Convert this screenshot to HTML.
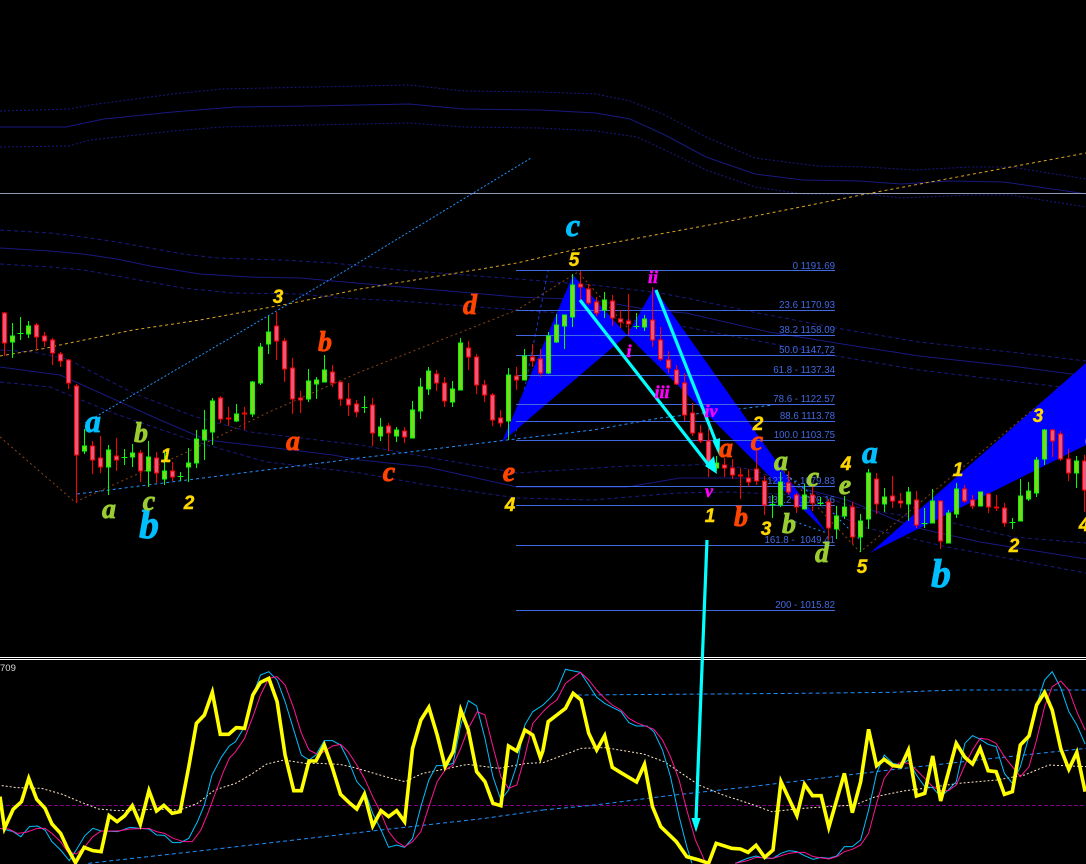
<!DOCTYPE html>
<html>
<head>
<meta charset="utf-8">
<style>
html,body{margin:0;padding:0;background:#000;width:1086px;height:864px;overflow:hidden}
svg{display:block;position:absolute;left:0;top:0}
.l{font-family:"Liberation Serif",serif;font-weight:bold;font-style:italic;text-anchor:middle;stroke-width:.8}
.d{font-family:"Liberation Sans",sans-serif;font-weight:bold;font-style:italic;text-anchor:middle;stroke-width:.4}
.f{font-family:"Liberation Sans",sans-serif;font-size:9.7px;fill:#4169e1;text-anchor:end}
.ns{vector-effect:non-scaling-stroke;fill:none}
</style>
</head>
<body>
<svg width="1086" height="864" viewBox="0 0 1086 864" xmlns="http://www.w3.org/2000/svg">
<rect width="1086" height="864" fill="#000"/>

<!-- upper bands -->
<g fill="none" stroke="#191980" stroke-width="1">
<polyline points="0,127 66,127 104,119 173,112 235,107 312,106 409,104 464,109 540,110 596,113 630,119 665,135 706,157 755,174 803,180 859,181 901,184 949,181 1004,182 1080,193 1086,194"/>
<polyline stroke-dasharray="2 2" points="0,111 69,109 90,105 173,94 222,89 312,87 409,85 464,91 540,92 596,94 630,101 665,115 706,137 755,158 817,166 866,167 914,170 970,167 1011,167 1086,179"/>
<polyline stroke-dasharray="2 2" points="0,147 69,146 90,140 173,131 222,127 312,125 409,123 464,127 540,128 596,131 637,137 665,150 706,170 755,187 803,194 866,194 901,198 970,195 1011,195 1086,207"/>
<!-- mid bands -->
<polyline stroke-dasharray="4 3" points="0,230 50,233 83,237 117,242 150,248 183,254 217,258 283,260 333,263 400,270 517,279 593,285 660,293 686,298 753,312 836,328 919,342 1019,353 1086,361"/>
<polyline points="0,248 50,251 83,254 117,259 150,266 200,274 250,277 300,278 333,281 367,284 460,292 517,297 593,300 650,310 686,313 769,332 836,343 919,356 1019,367 1086,376"/>
<polyline stroke-dasharray="4 3" points="0,264 50,267 83,270 117,276 150,282 183,288 233,293 300,294 343,298 400,301 517,310 593,315 647,322 686,327 753,340 836,356 919,370 1019,382 1086,390"/>
<!-- lower bands -->
<polyline stroke-dasharray="4 3" points="0,350 33,352 67,359 133,393 193,416 250,432 360,445 517,473 627,466 693,465 713,463 753,470 847,505 880,512 953,523 1013,537 1086,543"/>
<polyline points="0,367 60,375 87,387 160,420 207,440 267,447 333,455 360,460 427,467 517,487 627,487 680,478 763,478 847,500 913,527 980,542 1086,559"/>
<polyline stroke-dasharray="4 3" points="0,382 50,387 113,413 200,443 267,462 360,473 427,485 517,498 593,500 677,493 730,492 797,495 863,527 947,547 1086,573"/>
</g>

<!-- horizontal line -->
<path d="M0 193.5H1086" stroke="#8e9bb5" stroke-width="1" shape-rendering="crispEdges"/>

<!-- trendlines -->
<g fill="none" stroke-width="1">
<polyline stroke="#daa520" stroke-dasharray="3 3" points="0,356 47,348 55,346 133,330 200,320 293,303 360,289 517,263 573,250 720,223 866,194 1086,153"/>
<polyline stroke="#1e90ff" stroke-dasharray="2 2" points="85,423 343,272 531,158"/>
<polyline stroke="#1e90ff" stroke-dasharray="3 3" points="77,494 360,458 507,440 593,430 660,418 730,410 773,405"/>
<polyline stroke="#8b4513" stroke-dasharray="2 3" points="0,437 75,502 187,452 267,413 360,372 517,310 578,272 627,327 700,390 757,443 860,552 1086,366"/>
<polyline stroke="#1b3ad8" stroke-dasharray="3 3" points="515,437 548,271"/>
<polyline stroke="#1e90ff" stroke-dasharray="2 3" points="755,450 825,505 860,540"/>
<polyline stroke="#1e90ff" stroke-dasharray="2 3" points="790,520 827,533"/>
</g>

<!-- blue pattern -->
<g fill="#0000ff">
<polygon points="502,442 573,275 627,335"/>
<polygon points="627,335 654,288 827,533"/>
<polygon points="870,553 1086,363 1086,445"/>
</g>

<!-- fibonacci -->
<path d="M516 270.5H835M516 310.5H835M516 335.5H835M516 355.5H835M516 375.5H835M516 404.5H835M516 421.5H835M516 440.5H835M516 486.5H835M516 505.5H835M516 545.5H835M516 610.5H835" stroke="#4169e1" stroke-width="1" fill="none" shape-rendering="crispEdges"/>
<text class="f" x="835" y="269">0 1191.69</text>
<text class="f" x="835" y="308">23.6 1170.93</text>
<text class="f" x="835" y="333">38.2 1158.09</text>
<text class="f" x="835" y="353">50.0 1147.72</text>
<text class="f" x="835" y="373">61.8 - 1137.34</text>
<text class="f" x="835" y="402">78.6 - 1122.57</text>
<text class="f" x="835" y="419">88.6 1113.78</text>
<text class="f" x="835" y="438">100.0 1103.75</text>
<text class="f" x="835" y="484">127.2 - 1079.83</text>
<text class="f" x="835" y="503">138.2 - 1070.16</text>
<text class="f" x="835" y="543">161.8 -&#160; 1049.41</text>
<text class="f" x="835" y="608">200 - 1015.82</text>

<!-- green candles -->
<g shape-rendering="crispEdges">
<path stroke="#00ff00" stroke-width="1" fill="none" d="M12.5 323V358M20.5 317V340M17.5 333.5h6M28.5 321V338M84.5 429V454M108.5 445V495M124.5 449V465M121.5 457.5h6M132.5 444V467M148.5 441V487M164.5 450V485M180.5 472V481M177.5 476.5h6M188.5 448V482M196.5 430V468M204.5 410V460M212.5 398V445M236.5 404V422M252.5 381V417M260.5 343V385M268.5 316V354M308.5 369V402M316.5 377V399M324.5 355V382M364.5 396V413M361.5 407.5h6M380.5 418V441M396.5 427V442M412.5 401V438M420.5 378V419M428.5 367V395M452.5 381V407M460.5 338V390M508.5 368V440M524.5 349V380M548.5 332V374M556.5 314V343M564.5 315V349M572.5 274V327M604.5 292V318M636.5 313V329M633.5 326.5h6M644.5 315V331M716.5 456V471M772.5 495V518M769.5 504.5h6M780.5 472V507M804.5 484V509M820.5 497V506M817.5 503.5h6M836.5 506V539M844.5 496V519M860.5 514V552M868.5 469V529M884.5 488V512M908.5 487V521M924.5 508V528M921.5 523.5h6M932.5 489V523M948.5 510V543M956.5 483V518M980.5 492V506M1012.5 518V529M1009.5 522.5h6M1020.5 479V521M1028.5 482V501M1036.5 457V497M1044.5 429V465M1076.5 456V488"/>
<path stroke="#00ff00" stroke-width="1" fill="#7fd81e" d="M10.5 336h4v6h-4zM26.5 326h4v8h-4zM82.5 446h4v5h-4zM106.5 450h4v17h-4zM130.5 453h4v4h-4zM146.5 457h4v14h-4zM162.5 471h4v8h-4zM186.5 463h4v4h-4zM194.5 439h4v24h-4zM202.5 430h4v10h-4zM210.5 401h4v31h-4zM234.5 414h4v7h-4zM250.5 382h4v32h-4zM258.5 347h4v36h-4zM266.5 332h4v12h-4zM306.5 381h4v18h-4zM314.5 380h4v4h-4zM322.5 370h4v12h-4zM378.5 427h4v9h-4zM394.5 430h4v6h-4zM410.5 410h4v28h-4zM418.5 387h4v24h-4zM426.5 371h4v18h-4zM450.5 389h4v13h-4zM458.5 343h4v47h-4zM506.5 375h4v46h-4zM522.5 356h4v24h-4zM546.5 336h4v37h-4zM554.5 325h4v17h-4zM562.5 315h4v11h-4zM570.5 285h4v32h-4zM602.5 300h4v10h-4zM642.5 319h4v8h-4zM714.5 463h4v5h-4zM778.5 482h4v23h-4zM802.5 495h4v14h-4zM834.5 516h4v13h-4zM842.5 507h4v9h-4zM858.5 521h4v16h-4zM866.5 473h4v46h-4zM882.5 497h4v7h-4zM906.5 492h4v12h-4zM930.5 501h4v22h-4zM946.5 513h4v30h-4zM954.5 489h4v25h-4zM978.5 492h4v14h-4zM1018.5 496h4v25h-4zM1026.5 491h4v8h-4zM1034.5 460h4v33h-4zM1042.5 430h4v29h-4zM1074.5 461h4v12h-4z"/>

<!-- red candles -->
<path stroke="#ff0000" stroke-width="1" fill="none" d="M4.5 312V356M36.5 323V350M44.5 332V347M52.5 338V365M60.5 352V367M68.5 359V389M76.5 384V503M92.5 441V474M100.5 436V473M116.5 438V471M140.5 450V482M156.5 452V483M172.5 462V481M220.5 396V423M228.5 407V426M244.5 407V430M276.5 312V360M284.5 338V382M292.5 358V414M300.5 391V413M332.5 365V387M340.5 382V406M348.5 383V416M356.5 400V417M372.5 398V446M388.5 423V451M404.5 427V443M436.5 370V391M444.5 377V407M468.5 341V370M476.5 354V394M484.5 380V402M492.5 393V426M500.5 410V427M516.5 367V390M532.5 344V367M540.5 349V377M580.5 271V301M588.5 284V305M596.5 297V316M612.5 295V326M620.5 310V328M628.5 294V335M652.5 287V347M660.5 327V361M668.5 351V373M676.5 365V385M684.5 373V421M692.5 403V436M700.5 425V443M708.5 428V477M724.5 458V477M732.5 459V479M740.5 468V499M748.5 469V487M756.5 451V485M764.5 476V515M788.5 471V495M796.5 493V513M812.5 486V511M828.5 499V540M852.5 502V544M876.5 473V514M892.5 476V508M900.5 493V508M916.5 491V528M940.5 501V549M964.5 485V503M972.5 495V509M988.5 493V513M996.5 495V511M1004.5 503V527M1052.5 429V457M1060.5 431V461M1068.5 449V481M1084.5 455V512"/>
<path stroke="#ff0000" stroke-width="1" fill="#e8587f" d="M2.5 313h4v30h-4zM34.5 325h4v12h-4zM42.5 336h4v5h-4zM50.5 340h4v13h-4zM58.5 354h4v7h-4zM66.5 360h4v23h-4zM74.5 386h4v69h-4zM90.5 446h4v14h-4zM98.5 458h4v9h-4zM114.5 456h4v4h-4zM138.5 453h4v18h-4zM154.5 458h4v15h-4zM170.5 471h4v6h-4zM218.5 398h4v21h-4zM226.5 418h4v1h-4zM242.5 413h4v1h-4zM274.5 326h4v15h-4zM282.5 341h4v28h-4zM290.5 368h4v31h-4zM298.5 398h4v2h-4zM330.5 372h4v11h-4zM338.5 382h4v17h-4zM346.5 399h4v6h-4zM354.5 404h4v8h-4zM370.5 405h4v28h-4zM386.5 426h4v7h-4zM402.5 431h4v6h-4zM434.5 374h4v9h-4zM442.5 383h4v18h-4zM466.5 348h4v9h-4zM474.5 357h4v28h-4zM482.5 385h4v10h-4zM490.5 395h4v25h-4zM498.5 418h4v5h-4zM514.5 376h4v4h-4zM530.5 357h4v4h-4zM538.5 359h4v14h-4zM578.5 284h4v3h-4zM586.5 289h4v14h-4zM594.5 302h4v11h-4zM610.5 301h4v17h-4zM618.5 319h4v3h-4zM626.5 321h4v3h-4zM650.5 320h4v20h-4zM658.5 340h4v19h-4zM666.5 360h4v8h-4zM674.5 370h4v14h-4zM682.5 383h4v32h-4zM690.5 413h4v20h-4zM698.5 433h4v8h-4zM706.5 441h4v21h-4zM722.5 465h4v3h-4zM730.5 468h4v7h-4zM738.5 475h4v1h-4zM746.5 478h4v4h-4zM754.5 469h4v12h-4zM762.5 481h4v24h-4zM786.5 483h4v9h-4zM794.5 495h4v12h-4zM810.5 495h4v8h-4zM826.5 502h4v26h-4zM850.5 507h4v30h-4zM874.5 479h4v25h-4zM890.5 496h4v5h-4zM898.5 501h4v2h-4zM914.5 500h4v25h-4zM938.5 501h4v40h-4zM962.5 489h4v12h-4zM970.5 500h4v6h-4zM986.5 494h4v13h-4zM994.5 507h4v1h-4zM1002.5 508h4v15h-4zM1050.5 430h4v11h-4zM1058.5 434h4v25h-4zM1066.5 459h4v14h-4zM1082.5 461h4v29h-4z"/>
</g>

<!-- arrows -->
<g stroke="#00ffff" fill="none" stroke-width="3.2">
<path d="M580 300L711 468"/>
<path d="M656 290L716 442"/>
<path d="M707 540L696 820"/>
</g>
<g fill="#00ffff">
<polygon points="717,474 705,466 714,456"/>
<polygon points="712.5,441 720,438 719.5,456"/>
<polygon points="691.5,818 700.5,818 696,832"/>
</g>

<!-- wave labels -->
<g class="l" fill="#00bfff" stroke="#00bfff" font-size="32">
<text x="93" y="432">a</text><text x="573" y="236">c</text><text x="870" y="463">a</text>
<text x="149" y="538" font-size="40">b</text><text x="941" y="587" font-size="40">b</text>
</g>
<g class="l" fill="#ff4500" stroke="#ff4500" font-size="28">
<text x="325" y="351">b</text><text x="293" y="450">a</text><text x="389" y="481">c</text><text x="470" y="314">d</text><text x="509" y="481">e</text><text x="726" y="457">a</text><text x="757" y="450">c</text><text x="741" y="526">b</text>
</g>
<g class="l" fill="#9acd32" stroke="#9acd32" font-size="28">
<text x="109" y="518">a</text><text x="141" y="442">b</text><text x="149" y="510">c</text><text x="781" y="470">a</text><text x="813" y="486">c</text><text x="845" y="494">e</text><text x="789" y="533">b</text><text x="822" y="562">d</text>
</g>
<g class="d" fill="#ffd700" stroke="#ffd700" font-size="19">
<text x="278" y="303">3</text><text x="166" y="462">1</text><text x="189" y="509">2</text><text x="574" y="266">5</text><text x="510" y="511">4</text><text x="758" y="430">2</text><text x="710" y="522">1</text><text x="766" y="535">3</text><text x="846" y="470">4</text><text x="862" y="573">5</text><text x="958" y="476">1</text><text x="1014" y="552">2</text><text x="1038" y="422">3</text><text x="1084" y="531">4</text>
</g>
<g class="l" fill="#ff00ff" stroke="#ff00ff" font-size="18" style="stroke-width:.5">
<text x="629" y="357">i</text><text x="653" y="283">ii</text><text x="662" y="398">iii</text><text x="711" y="417">iv</text><text x="709" y="497">v</text>
</g>
<text class="l" x="1093" y="447" font-size="34" fill="#ffc0cb" stroke="#ffc0cb">c</text>

<!-- separators -->
<path d="M0 657.5H1086M0 659.5H1086" stroke="#fff" stroke-width="1" shape-rendering="crispEdges"/>
<text x="0" y="671" font-family="'Liberation Sans',sans-serif" font-size="9.5" fill="#ddd">709</text>

<!-- indicator -->
<path d="M0 805.5H1086" stroke="#800080" stroke-dasharray="4 2" stroke-width="1" shape-rendering="crispEdges"/>
<g transform="translate(0,650) scale(0.3464,0.33333)">
<polyline class="ns" stroke="#ffe4c4" stroke-width="1" stroke-dasharray="2 2" points="5,407 50,413 120,415 180,433 230,455 285,477 340,482 400,480 450,477 520,480 570,460 620,420 680,400 730,370 770,342 820,330 880,340 920,340 980,343 1020,352 1080,370 1130,385 1170,395 1220,370 1270,360 1350,343 1440,355 1520,340 1568,338"/>
<polyline class="ns" stroke="#1e90ff" stroke-width="1" stroke-dasharray="4 3" points="255,640 600,600 1100,540 1400,505 1568,480"/>
<polyline class="ns" stroke="#00bfff" stroke-width="1" points="0,535 38,545 60,560 85,530 108,528 130,540 150,575 175,600 200,632 220,600 245,557 268,535 292,543 340,545 375,532 405,535 430,537 452,555 475,556 498,578 520,578 545,565 570,515 590,465 612,375 640,320 662,288 680,275 706,230 730,135 752,75 776,65 800,90 823,155 848,240 870,315 892,330 912,315 936,272 960,272 983,285 1005,330 1030,395 1052,420 1076,490 1100,540 1122,592 1145,585 1168,592 1191,565 1215,470 1238,390 1260,347 1285,347 1308,340 1330,225 1352,152 1376,168 1400,265 1423,380 1446,450 1468,420 1492,345 1515,225 1538,185 1568,165"/>
<polyline class="ns" stroke="#ff1493" stroke-width="1" points="0,535 25,537 50,550 75,547 108,535 130,535 150,550 175,575 195,605 220,612 245,590 268,560 292,543 340,543 375,537 430,535 452,545 475,550 500,565 530,575 555,575 580,540 600,490 625,420 645,365 662,325 680,305 706,265 730,200 752,135 776,85 800,80 823,105 848,175 870,250 892,300 920,315 960,288 983,283 1005,305 1030,345 1052,385 1076,440 1100,490 1122,545 1145,575 1168,590 1191,575 1215,545 1238,470 1262,395 1285,360 1308,345 1330,295 1352,235 1378,185 1400,195 1423,290 1446,380 1468,415 1492,405 1515,320 1538,220 1568,185"/>
<polyline class="ns" stroke="#ffff00" stroke-width="3.6" stroke-linejoin="miter" points="0,440 13,535 38,478 62,455 83,385 106,448 130,475 150,522 175,550 195,595 218,638 243,592 268,602 292,605 315,497 338,515 360,497 382,467 405,523 430,422 452,483 473,466 497,490 520,485 545,350 567,220 590,195 613,127 636,253 660,253 682,233 706,235 730,135 752,97 776,85 800,155 823,315 848,422 870,422 892,333 912,333 936,285 960,355 983,433 1007,457 1030,477 1052,433 1076,528 1100,482 1122,500 1145,482 1168,515 1191,295 1215,210 1238,172 1262,255 1285,350 1308,305 1330,180 1352,240 1376,365 1400,395 1423,460 1446,467 1468,288 1492,303 1515,240 1538,255 1560,323 1568,300"/>
</g>
<g transform="translate(543,650) scale(0.3464,0.33333)">
<polyline class="ns" stroke="#ffe4c4" stroke-width="1" stroke-dasharray="2 2" points="0,338 60,315 110,295 180,293 290,312 350,335 400,370 450,405 520,435 600,462 660,485 750,475 820,470 900,465 960,440 1040,423 1100,415 1200,400 1310,390 1390,375 1460,345 1568,350"/>
<polyline class="ns" stroke="#1e90ff" stroke-width="1" stroke-dasharray="4 3" points="0,480 150,465 380,435 600,410 800,385 1000,360 1300,325 1568,295"/>
<polyline class="ns" stroke="#1e90ff" stroke-width="1" stroke-dasharray="4 3" points="100,135 740,130 1000,127 1200,120 1568,120"/>
<polyline class="ns" stroke="#00bfff" stroke-width="1" points="0,165 20,145 40,120 65,58 108,67 132,105 155,142 178,160 200,172 225,185 248,218 270,228 300,228 320,245 345,300 368,380 393,500 415,590 430,640"/>
<polyline class="ns" stroke="#00bfff" stroke-width="1" points="555,640 590,625 615,618 640,625 664,625 687,610 710,602 733,605 755,617 780,628 803,622 825,625 848,618 870,590 893,590 917,570 940,480 963,370 985,315 1010,340 1033,345 1055,330 1078,375 1102,410 1125,413 1148,440 1170,420 1193,395 1218,280 1240,257 1262,268 1285,283 1308,290 1332,370 1355,400 1378,350 1403,260 1425,165 1448,90 1470,65 1495,115 1518,185 1541,225 1565,282"/>
<polyline class="ns" stroke="#ff1493" stroke-width="1" points="0,185 20,165 40,150 65,100 108,67 132,90 155,120 178,145 200,165 225,180 248,205 270,218 300,230 320,238 345,270 368,320 393,390 415,480 440,570 470,640"/>
<polyline class="ns" stroke="#ff1493" stroke-width="1" points="555,640 590,632 615,622 664,625 710,610 733,607 755,607 780,620 825,627 848,620 870,605 893,598 917,585 940,550 963,460 985,385 1010,350 1033,337 1055,340 1078,360 1102,385 1125,410 1148,422 1170,422 1193,405 1218,345 1240,300 1262,265 1285,268 1308,280 1332,320 1355,350 1378,380 1403,350 1425,270 1448,170 1470,110 1495,93 1518,120 1541,185 1565,240"/>
<polyline class="ns" stroke="#ffff00" stroke-width="3.6" stroke-linejoin="miter" points="0,300 15,215 40,195 65,175 87,130 110,150 132,250 155,300 178,257 200,352 225,368 270,396 293,343 316,470 340,530 385,575 415,620 450,630 478,640 500,580 545,595 570,597 592,607 615,586 640,622 664,600 687,395 733,497 755,403 778,437 803,437 825,532 870,370 893,488 917,395 940,238 963,347 985,328 1010,347 1033,350 1055,300 1078,438 1102,430 1125,318 1148,453 1193,280 1218,322 1240,342 1262,295 1285,362 1308,365 1332,433 1355,425 1378,285 1403,258 1425,165 1448,127 1470,180 1495,297 1518,358 1541,307 1565,425"/>
</g>
<!-- arrow over indicator -->
<path d="M702.5 650L696 820" stroke="#00ffff" stroke-width="2.4" fill="none"/>
<polygon points="691.5,818 700.5,818 696,832" fill="#00ffff"/>
</svg>
</body>
</html>
